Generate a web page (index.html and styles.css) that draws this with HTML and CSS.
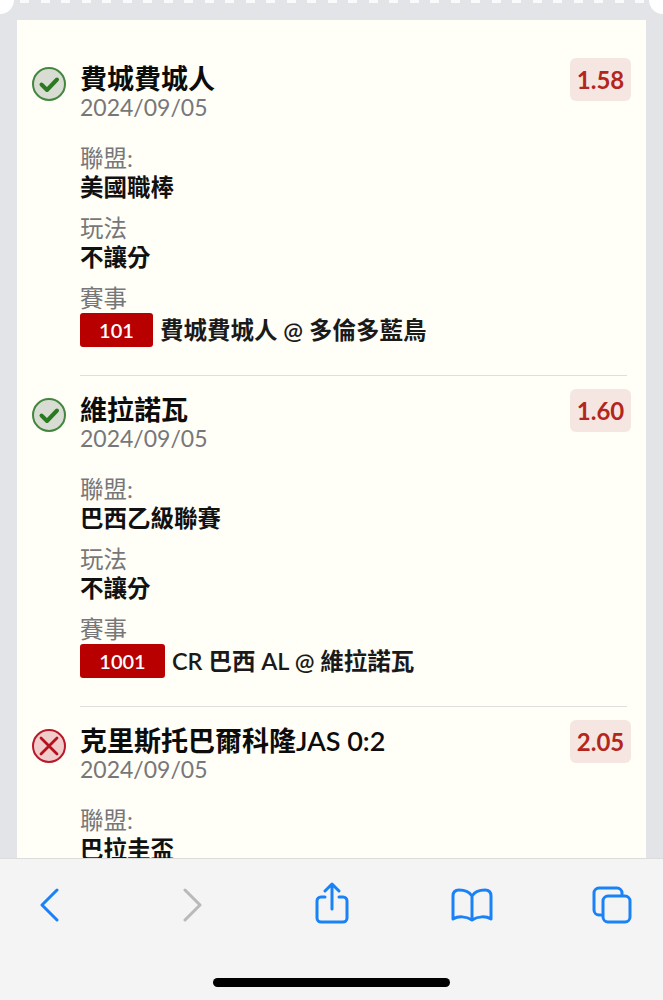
FILE: index.html
```html
<!DOCTYPE html>
<html lang="zh-Hant">
<head>
    <meta charset="UTF-8">
    <meta name="viewport" content="width=device-width, initial-scale=1.0">
    <title>投注紀錄</title>
    <link rel="stylesheet" href="styles.css">
</head>
<body>
    <div class="screen">
        <div class="ticket-edge"></div>
        <span class="corner corner-left"></span>
        <span class="corner corner-right"></span>

        <main class="card">
            <section class="bet">
                <svg class="status" viewBox="0 0 34 34">
                    <circle class="win-ring" cx="17" cy="17" r="16"/>
                    <path class="win-mark" d="M9.5 17.5l5.5 5.5 10-10.5"/>
                </svg>
                <div class="bet-body">
                    <div class="bet-head">
                        <div>
                            <h2>費城費城人</h2>
                            <p class="date">2024/09/05</p>
                        </div>
                        <span class="odds">1.58</span>
                    </div>
                    <p class="label">聯盟:</p>
                    <p class="value">美國職棒</p>
                    <p class="label">玩法</p>
                    <p class="value">不讓分</p>
                    <p class="label">賽事</p>
                    <div class="match">
                        <span class="tag tag-short">101</span>
                        <span>費城費城人 @ 多倫多藍鳥</span>
                    </div>
                </div>
            </section>

            <section class="bet">
                <svg class="status" viewBox="0 0 34 34">
                    <circle class="win-ring" cx="17" cy="17" r="16"/>
                    <path class="win-mark" d="M9.5 17.5l5.5 5.5 10-10.5"/>
                </svg>
                <div class="bet-body">
                    <div class="bet-head">
                        <div>
                            <h2>維拉諾瓦</h2>
                            <p class="date">2024/09/05</p>
                        </div>
                        <span class="odds">1.60</span>
                    </div>
                    <p class="label">聯盟:</p>
                    <p class="value">巴西乙級聯賽</p>
                    <p class="label">玩法</p>
                    <p class="value">不讓分</p>
                    <p class="label">賽事</p>
                    <div class="match">
                        <span class="tag tag-long">1001</span>
                        <span>CR 巴西 AL @ 維拉諾瓦</span>
                    </div>
                </div>
            </section>

            <section class="bet">
                <svg class="status" viewBox="0 0 34 34">
                    <circle class="lose-ring" cx="17" cy="17" r="16"/>
                    <path class="lose-mark" d="M9 9l16 16M25 9L9 25"/>
                </svg>
                <div class="bet-body">
                    <div class="bet-head">
                        <div>
                            <h2>克里斯托巴爾科隆JAS 0:2</h2>
                            <p class="date">2024/09/05</p>
                        </div>
                        <span class="odds">2.05</span>
                    </div>
                    <p class="label">聯盟:</p>
                    <p class="value">巴拉圭盃</p>
                </div>
            </section>
        </main>

        <footer class="toolbar">
            <div class="tools">
                <svg class="tool tool-back" viewBox="0 0 20 34"><path d="M18 2L3 17l15 15"/></svg>
                <svg class="tool tool-forward" viewBox="0 0 20 34"><path d="M2 2l15 15L2 32"/></svg>
                <svg class="tool tool-share" viewBox="0 0 34 42">
                    <path d="M10 15H6a4 4 0 0 0-4 4v17a4 4 0 0 0 4 4h22a4 4 0 0 0 4-4V19a4 4 0 0 0-4-4h-4"/>
                    <path d="M17 27V3M10 9l7-7 7 7"/>
                </svg>
                <svg class="tool tool-book" viewBox="0 0 42 34">
                    <path d="M21 8C18 3 13 2 8 2 4 2 2 4 2 8v23c5-3 13-3 19 1 6-4 14-4 19-1V8c0-4-2-6-6-6-5 0-10 1-13 6zM21 8v24"/>
                </svg>
                <svg class="tool tool-tabs" viewBox="0 0 40 38">
                    <path d="M9 29H7a5 5 0 0 1-5-5V7a5 5 0 0 1 5-5h18a5 5 0 0 1 5 5v2"/>
                    <rect x="11" y="10" width="27" height="26" rx="5"/>
                </svg>
            </div>
            <div class="home-bar"></div>
        </footer>
    </div>
</body>
</html>
```

FILE: styles.css
```css
* {
    box-sizing: border-box;
}
body {
    margin: 0;
    background-color: #e2e4e7;
    font-family: Lato, "Noto Sans CJK TC", sans-serif;
    color: #111;
}
h2, p {
    margin: 0;
}
.screen {
    position: relative;
    height: 1000px;
    overflow: hidden;
    background-color: #e2e4e7;
}
.ticket-edge {
    height: 20px;
    background-image: repeating-linear-gradient(90deg, #fafafa 0, #fafafa 9px, transparent 9px, transparent 20.5px);
    background-size: 100% 3px;
    background-repeat: no-repeat;
    background-position: 20px 0;
}
.corner {
    position: absolute;
    top: -14px;
    width: 28px;
    height: 28px;
    border-radius: 50%;
    background-color: #fff;
}
.corner-left {
    left: -14px;
}
.corner-right {
    right: -14px;
}
.card {
    margin: 0 17px;
    padding: 0 19px 0 15px;
    background-color: #fffef7;
}
.bet {
    display: flex;
    gap: 14px;
    padding-top: 31px;
}
.bet + .bet {
    padding-top: 6px;
}
.status {
    flex: none;
    width: 34px;
    height: 34px;
    margin-top: 16px;
}
.win-ring {
    fill: #d9dcd2;
    stroke: #43873f;
    stroke-width: 2;
}
.win-mark {
    fill: none;
    stroke: #2a7a22;
    stroke-width: 4;
    stroke-linecap: round;
    stroke-linejoin: round;
}
.lose-ring {
    fill: #f0cdcb;
    stroke: #b8182a;
    stroke-width: 2;
}
.lose-mark {
    fill: none;
    stroke: #b5101c;
    stroke-width: 2.8;
    stroke-linecap: round;
}
.bet-body {
    flex: 1;
    padding-bottom: 28px;
    border-bottom: 1px solid #dfdfdb;
}
.bet:last-child .bet-body {
    border-bottom: 0;
}
.bet-head {
    display: flex;
    justify-content: space-between;
    align-items: flex-start;
    margin-bottom: 23px;
    padding-top: 14px;
}
h2 {
    font-size: 27px;
    line-height: 28px;
    font-weight: 600;
    color: #0c0c0c;
}
.date {
    font-size: 23px;
    line-height: 28px;
    color: #77777a;
}
.odds {
    width: 61px;
    height: 43px;
    margin: -7px -4px 0 0;
    border-radius: 6px;
    background-color: #f6e6e1;
    color: #b3261e;
    font-size: 24px;
    font-weight: 700;
    line-height: 43px;
    text-align: center;
}
.label {
    font-size: 23.5px;
    line-height: 29px;
    color: #77777a;
}
.value {
    margin-bottom: 12px;
    font-size: 23.5px;
    line-height: 29px;
    font-weight: 600;
    color: #111;
}
.match {
    display: flex;
    align-items: center;
    gap: 7px;
    font-size: 23.5px;
    line-height: 34px;
    font-weight: 600;
    color: #1a1a1a;
}
.tag {
    height: 34px;
    border-radius: 3px;
    background-color: #b80000;
    color: #fff;
    font-size: 20px;
    font-weight: 600;
    line-height: 34px;
    text-align: center;
}
.tag-short {
    width: 73px;
}
.tag-long {
    width: 85px;
}
.toolbar {
    position: absolute;
    left: 0;
    right: 0;
    top: 858px;
    height: 142px;
    border-top: 1px solid #dcdcdc;
    background-color: #f4f4f5;
}
.tools {
    display: flex;
    align-items: center;
    height: 92px;
    padding-left: 39px;
}
.tool {
    flex: none;
    fill: none;
    stroke: #1a82f7;
    stroke-width: 3;
    stroke-linecap: round;
    stroke-linejoin: round;
}
.tool-back, .tool-forward {
    width: 20px;
    height: 34px;
}
.tool-forward {
    margin-left: 124px;
    stroke: #b9b9bb;
}
.tool-share {
    width: 34px;
    height: 42px;
    margin: -4px 0 0 112px;
}
.tool-book {
    width: 42px;
    height: 34px;
    margin-left: 102px;
}
.tool-tabs {
    width: 40px;
    height: 38px;
    margin-left: 99px;
}
.home-bar {
    width: 237px;
    height: 9px;
    margin: 27px auto 0;
    border-radius: 5px;
    background-color: #000;
}
```
